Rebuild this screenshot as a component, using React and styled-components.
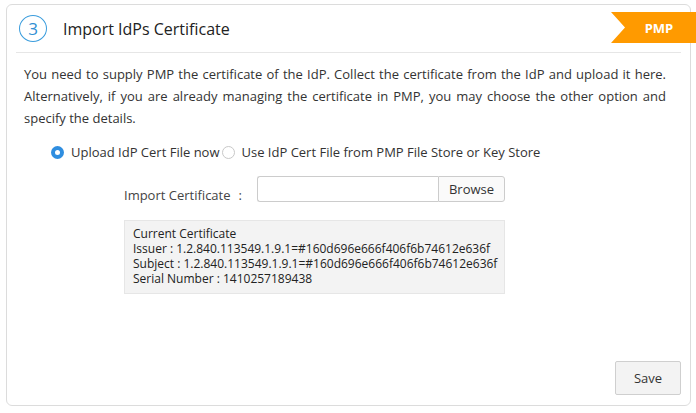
import React from "react";
import styled, { createGlobalStyle } from "styled-components";

const Global = createGlobalStyle`
  html, body { margin: 0; padding: 0; background: #fff; }
  body { font-family: "Open Sans", "Liberation Sans", sans-serif; color: #333; }
  * { box-sizing: border-box; }
`;

const Card = styled.div`
  position: relative;
  margin: 4px 0 0 6px;
  width: 685px;
  height: 402px;
  border: 1px solid #dcdcdc;
  border-radius: 6px;
  display: flex;
  flex-direction: column;
  background: #fff;
`;

const Header = styled.div`
  height: 48px;
  margin: 0 9px;
  padding-left: 3px;
  display: flex;
  align-items: center;
  gap: 16px;
  border-bottom: 1px solid #e6e6e6;
`;

const StepCircle = styled.div`
  width: 28px;
  height: 27px;
  border: 1.5px solid #3b9ddd;
  border-radius: 50%;
  color: #2f8fd3;
  font-size: 17px;
  display: flex;
  align-items: center;
  justify-content: center;
  line-height: 1;
`;

const Title = styled.div`
  font-size: 16px;
  color: #222;
`;

const Ribbon = styled.div`
  position: absolute;
  top: 7px;
  right: -7px;
  width: 86px;
  height: 31px;
  background: #ff9a00;
  clip-path: polygon(0 0, 100% 0, 100% 100%, 0 100%, 14px 50%);
  color: #fff;
  font-weight: 700;
  font-size: 13px;
  display: flex;
  align-items: center;
  justify-content: center;
  padding-left: 10px;
`;

const Body = styled.div`
  flex: 1;
  padding: 10px 24px 0 17px;
  display: flex;
  flex-direction: column;
`;

const Para = styled.p`
  margin: 0;
  font-size: 13px;
  line-height: 22px;
  text-align: justify;
  color: #333;
`;

const RadioRow = styled.div`
  margin-top: 14px;
  padding-left: 27px;
  display: flex;
  align-items: center;
  font-size: 13px;
  color: #333;
`;

const RadioOption = styled.label`
  display: flex;
  align-items: center;
  gap: 7px;
  margin-right: 2px;
`;

const RadioDot = styled.span`
  width: 13px;
  height: 13px;
  border-radius: 50%;
  border: ${(p) => (p.$checked ? "none" : "1px solid #c8c8c8")};
  background: ${(p) => (p.$checked ? "#2f8ee0" : "#fff")};
  display: inline-flex;
  align-items: center;
  justify-content: center;
  &::after {
    content: "";
    display: ${(p) => (p.$checked ? "block" : "none")};
    width: 5px;
    height: 5px;
    border-radius: 50%;
    background: #fff;
  }
`;

const FormRow = styled.div`
  margin-top: 13px;
  padding-left: 100px;
  display: flex;
  align-items: center;
  font-size: 13px;
  color: #444;
`;

const Label = styled.span`
  width: 133px;
  display: flex;
  justify-content: space-between;
  padding-right: 15px;
  padding-top: 12px;
  align-self: center;
`;

const FileInput = styled.div`
  width: 181px;
  height: 26px;
  border: 1px solid #ccc;
  border-right: none;
  border-radius: 3px 0 0 3px;
  background: #fff;
`;

const BrowseBtn = styled.div`
  width: 67px;
  height: 26px;
  border: 1px solid #ccc;
  border-radius: 0 3px 3px 0;
  background: #fafafa;
  display: flex;
  align-items: center;
  justify-content: center;
  color: #333;
`;

const CertBox = styled.div`
  margin: 16px 0 0 100px;
  width: 381px;
  height: 74px;
  background: #f3f3f3;
  border: 1px solid #e6e6e6;
  padding: 5px 4px 5px 8px;
  font-size: 12px;
  color: #222;
  white-space: nowrap;
`;

const CertLine = styled.div`
  height: 15px;
  line-height: 15px;
`;

const Footer = styled.div`
  display: flex;
  justify-content: flex-end;
  padding: 0 9px 10px 0;
`;

const SaveBtn = styled.button`
  width: 66px;
  height: 34px;
  border: 1px solid #cfcfcf;
  border-radius: 2px;
  background: #f3f3f3;
  font-family: inherit;
  font-size: 13px;
  color: #333;
`;

const certLines = [
  "Current Certificate",
  "Issuer : 1.2.840.113549.1.9.1=#160d696e666f406f6b74612e636f",
  "Subject : 1.2.840.113549.1.9.1=#160d696e666f406f6b74612e636f",
  "Serial Number : 1410257189438",
];

export default function App() {
  return (
    <>
      <Global />
      <Card>
        <Header>
          <StepCircle>3</StepCircle>
          <Title>Import IdPs Certificate</Title>
        </Header>
        <Ribbon>PMP</Ribbon>
        <Body>
          <Para>
            You need to supply PMP the certificate of the IdP. Collect the certificate from the IdP and upload it here.
            Alternatively, if you are already managing the certificate in PMP, you may choose the other option and
            specify the details.
          </Para>
          <RadioRow>
            <RadioOption>
              <RadioDot $checked />
              Upload IdP Cert File now
            </RadioOption>
            <RadioOption>
              <RadioDot />
              Use IdP Cert File from PMP File Store or Key Store
            </RadioOption>
          </RadioRow>
          <FormRow>
            <Label>
              <span>Import Certificate</span>
              <span>:</span>
            </Label>
            <FileInput />
            <BrowseBtn>Browse</BrowseBtn>
          </FormRow>
          <CertBox>
            {certLines.map((l) => (
              <CertLine key={l}>{l}</CertLine>
            ))}
          </CertBox>
        </Body>
        <Footer>
          <SaveBtn>Save</SaveBtn>
        </Footer>
      </Card>
    </>
  );
}
